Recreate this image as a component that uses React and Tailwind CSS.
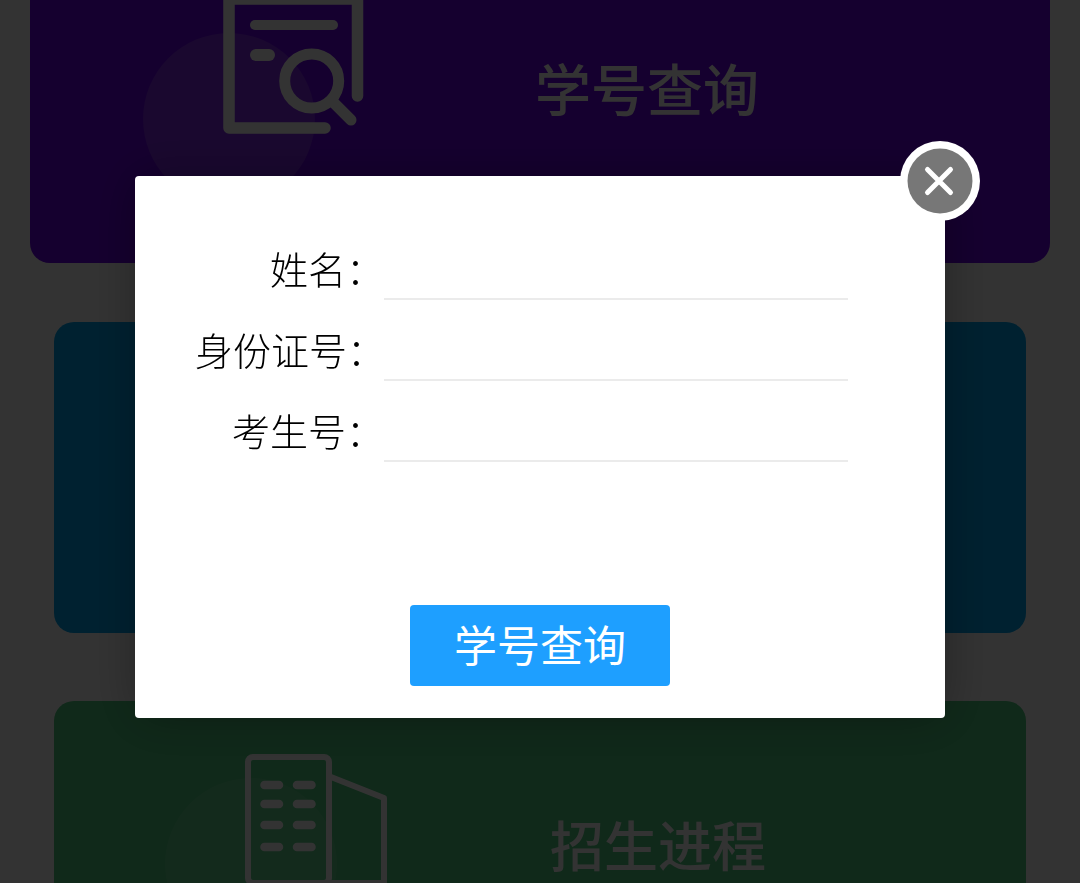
const fields = [
  { id: "name", label: "姓名：" },
  { id: "idcard", label: "身份证号：" },
  { id: "exam", label: "考生号：" },
];

function SearchArt() {
  return (
    <svg width="230" height="200" viewBox="140 0 230 200" fill="none" className="shrink-0" aria-hidden="true">
      <circle cx="229" cy="119" r="86" fill="#fff" fillOpacity="0.16" />
      <g stroke="#fff" strokeLinecap="round" strokeLinejoin="round">
        <path d="M325 128H229V-1H357.500V96" strokeWidth="11.500" />
        <path d="M255 25H333" strokeWidth="10" />
        <path d="M256 55H269" strokeWidth="12" />
        <circle cx="311.700" cy="81" r="27" strokeWidth="11" />
        <path d="M332 101L351 120" strokeWidth="11" />
      </g>
    </svg>
  );
}

function BuildingArt() {
  return (
    <svg width="240" height="200" viewBox="160 740 240 200" fill="none" className="shrink-0" aria-hidden="true">
      <circle cx="251" cy="864" r="86" fill="#fff" fillOpacity="0.1" />
      <g stroke="#fff" strokeWidth="6" strokeLinejoin="round">
        <rect x="248" y="757" width="81" height="126" rx="5" />
        <path d="M331 777L384 798V883H329" />
      </g>
      <g stroke="#fff" strokeWidth="8.500" strokeLinecap="round">
        <path d="M264.500 785H279M297 785H311.500" />
        <path d="M264.500 804H279M297 804H311.500" />
        <path d="M264.500 825H279M297 825H311.500" />
        <path d="M264.500 847H279M297 847H311.500" />
      </g>
    </svg>
  );
}

function QueryDialog() {
  return (
    <div
      role="dialog"
      aria-modal="true"
      aria-label="学号查询"
      className="relative w-3/4 rounded bg-white px-[60px] pt-16 pb-8 shadow-[1px_1px_50px_rgba(0,0,0,0.3)]"
    >
      <button
        type="button"
        aria-label="关闭"
        className="absolute -top-[35px] -right-[35px] flex size-20 items-center justify-center rounded-full bg-white"
      >
        <svg width="66" height="66" viewBox="0 0 66 66" aria-hidden="true">
          <circle cx="33" cy="33" r="32.500" fill="#777" />
          <path d="M20.500 21.500L43.500 44.500M43.500 21.500L20.500 44.500" stroke="#fff" strokeWidth="5" strokeLinecap="round" />
        </svg>
      </button>
      <form onSubmit={(e) => e.preventDefault()} className="flex flex-col">
        <div className="flex flex-col gap-[21px]">
          {fields.map((f) => (
            <div key={f.id} className="flex h-[60px] items-start pr-[37px]">
              <label htmlFor={f.id} className="w-[189px] shrink-0 text-right text-[38px] leading-[56px] font-light whitespace-nowrap text-black">
                {f.label}
              </label>
              <input
                id={f.id}
                type="text"
                className="h-full min-w-0 flex-1 border-b-2 border-[#ebebeb] bg-transparent text-[38px] outline-none"
              />
            </div>
          ))}
        </div>
        <button
          type="submit"
          className="mt-[143px] h-[81px] w-[260px] self-center rounded bg-[#1e9fff] pb-[5px] text-[43px] leading-[76px] text-white"
        >
          学号查询
        </button>
      </form>
    </div>
  );
}

export default function App() {
  return (
    <div className="h-screen overflow-hidden bg-white font-['Noto_Sans_CJK_SC',sans-serif]">
      <main className="flex flex-col">
        <section className="mx-[30px] flex h-[263px] gap-[165px] rounded-b-[20px] bg-[#6a00e8] pl-[110px]">
          <SearchArt />
          <h2 className="pt-[57px] text-[56px] leading-[60px] font-medium whitespace-nowrap text-white">学号查询</h2>
        </section>
        <section className="mx-[54px] mt-[59px] h-[311px] rounded-[20px] bg-[#00a5f0]" />
        <section className="mx-[54px] mt-[68px] flex h-[311px] gap-[150px] overflow-hidden rounded-[20px] bg-[#50cc80] pt-[39px] pl-[106px]">
          <BuildingArt />
          <h2 className="pt-[74px] text-[54px] leading-[60px] font-medium whitespace-nowrap text-white">招生进程</h2>
        </section>
      </main>
      <div className="fixed inset-0 flex items-start justify-center bg-black/80 pt-44">
        <QueryDialog />
      </div>
    </div>
  );
}
